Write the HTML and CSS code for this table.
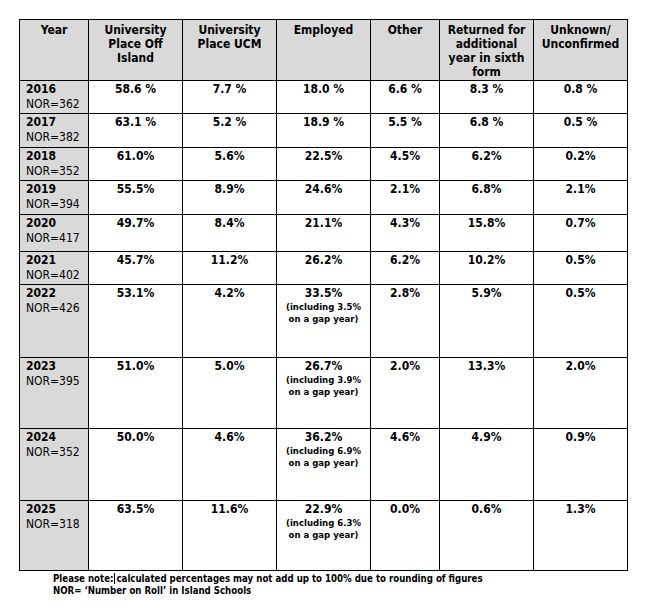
FILE: index.html
```html
<!DOCTYPE html>
<html>
<head>
<meta charset="utf-8">
<link rel="stylesheet" href="styles.css">
</head>
<body>
<div class="page">
<table class="dest">
  <colgroup>
    <col class="c-narrow"><col class="c-wide"><col class="c-wide"><col class="c-wide"><col class="c-narrow"><col class="c-wide"><col class="c-wide">
  </colgroup>
  <thead>
    <tr class="h-head">
      <th>Year</th>
      <th>University Place Off Island</th>
      <th>University Place UCM</th>
      <th>Employed</th>
      <th>Other</th>
      <th>Returned for additional year in sixth form</th>
      <th>Unknown/ Unconfirmed</th>
    </tr>
  </thead>
  <tbody>
    <tr class="h33"><td class="yr"><b>2016</b><br>NOR=362</td><td>58.6 %</td><td>7.7 %</td><td>18.0 %</td><td>6.6 %</td><td>8.3 %</td><td>0.8 %</td></tr>
    <tr class="h34"><td class="yr"><b>2017</b><br>NOR=382</td><td>63.1 %</td><td>5.2 %</td><td>18.9 %</td><td>5.5 %</td><td>6.8 %</td><td>0.5 %</td></tr>
    <tr class="h33"><td class="yr"><b>2018</b><br>NOR=352</td><td>61.0%</td><td>5.6%</td><td>22.5%</td><td>4.5%</td><td>6.2%</td><td>0.2%</td></tr>
    <tr class="h34"><td class="yr"><b>2019</b><br>NOR=394</td><td>55.5%</td><td>8.9%</td><td>24.6%</td><td>2.1%</td><td>6.8%</td><td>2.1%</td></tr>
    <tr class="h37"><td class="yr"><b>2020</b><br>NOR=417</td><td>49.7%</td><td>8.4%</td><td>21.1%</td><td>4.3%</td><td>15.8%</td><td>0.7%</td></tr>
    <tr class="h33"><td class="yr"><b>2021</b><br>NOR=402</td><td>45.7%</td><td>11.2%</td><td>26.2%</td><td>6.2%</td><td>10.2%</td><td>0.5%</td></tr>
    <tr class="h73"><td class="yr"><b>2022</b><br>NOR=426</td><td>53.1%</td><td>4.2%</td><td>33.5%<span class="note">(including 3.5%<br>on a gap year)</span></td><td>2.8%</td><td>5.9%</td><td>0.5%</td></tr>
    <tr class="h71"><td class="yr"><b>2023</b><br>NOR=395</td><td>51.0%</td><td>5.0%</td><td>26.7%<span class="note">(including 3.9%<br>on a gap year)</span></td><td>2.0%</td><td>13.3%</td><td>2.0%</td></tr>
    <tr class="h72"><td class="yr"><b>2024</b><br>NOR=352</td><td>50.0%</td><td>4.6%</td><td>36.2%<span class="note">(including 6.9%<br>on a gap year)</span></td><td>4.6%</td><td>4.9%</td><td>0.9%</td></tr>
    <tr class="h70"><td class="yr"><b>2025</b><br>NOR=318</td><td>63.5%</td><td>11.6%</td><td>22.9%<span class="note">(including 6.3%<br>on a gap year)</span></td><td>0.0%</td><td>0.6%</td><td>1.3%</td></tr>
  </tbody>
</table>
<div class="foot">
  <p>Please note:<span class="sep">calculated percentages may not add up to 100% due to rounding of figures</span></p>
  <p>NOR= ‘Number on Roll’ in Island Schools</p>
</div>
</div>
</body>
</html>
```

FILE: styles.css
```css
html, body {
  margin: 0;
  padding: 0;
  background: #fff;
}
.page {
  padding: 19px 0 0 19px;
  font-family: "DejaVu Sans Condensed", "DejaVu Sans", sans-serif;
  color: #000;
}
.dest {
  border-collapse: collapse;
  table-layout: fixed;
  width: 609px;
}
.c-narrow { width: 69px; }
.c-wide { width: 94px; }
.dest th, .dest td {
  border: 1px solid #000;
  vertical-align: top;
  text-align: center;
  font-size: 12px;
  font-weight: bold;
  line-height: 15px;
  padding: 1px 4px 0;
}
.dest th {
  background: #d9d9d9;
  line-height: 14px;
  padding-top: 3px;
}
.h-head { height: 61px; }
.dest td.yr {
  background: #d9d9d9;
  text-align: left;
  font-weight: normal;
  padding-left: 6px;
}
.yr b { font-weight: bold; }
.note {
  display: block;
  font-size: 9.5px;
  line-height: 11.5px;
  white-space: nowrap;
  margin: 0 -4px;
}
.h33 { height: 33px; }
.h34 { height: 34px; }
.h37 { height: 37px; }
.h73 { height: 73px; }
.h71 { height: 71px; }
.h72 { height: 72px; }
.h70 { height: 70px; }
.foot {
  padding-left: 34px;
  padding-top: 2px;
  font-size: 9.6px;
  font-weight: bold;
  line-height: 12px;
}
.foot p { margin: 0; }
.sep {
  border-left: 1px solid #000;
  padding-left: 1px;
  margin-left: 1px;
}
```
